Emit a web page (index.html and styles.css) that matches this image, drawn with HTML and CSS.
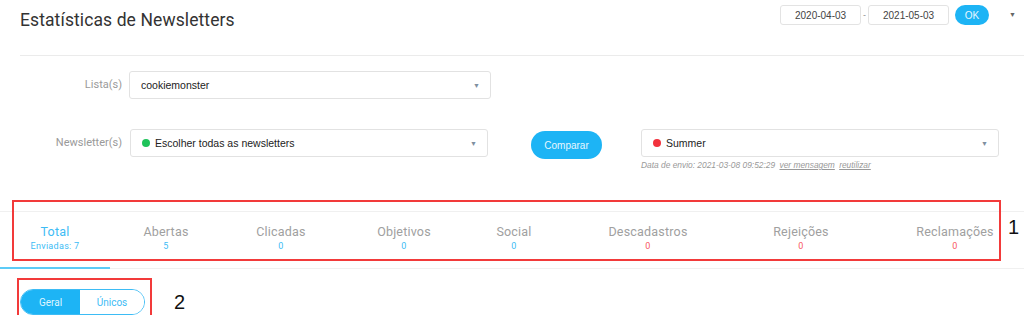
FILE: index.html
```
<!DOCTYPE html>
<html lang="pt">
<head>
  <meta charset="UTF-8" />
  <title>Estatísticas de Newsletters</title>
  <link rel="stylesheet" href="styles.css">
</head>
<body>

<div class="header">
  <h1>Estatísticas de Newsletters</h1>
  <div class="dates">
    <input type="text" class="date" value="2020-04-03">
    <span class="dash">-</span>
    <input type="text" class="date" value="2021-05-03">
    <button class="ok-btn">OK</button>
    <span class="caret">&#9660;</span>
  </div>
</div>

<div class="filters">
  <div class="row">
    <label class="lbl">Lista(s)</label>
    <div class="select wide">
      <span>cookiemonster</span>
      <span class="arrow">&#9660;</span>
    </div>
  </div>

  <div class="row row-news">
    <label class="lbl">Newsletter(s)</label>
    <div class="select news">
      <span class="dot green"></span>
      <span>Escolher todas as newsletters</span>
      <span class="arrow">&#9660;</span>
    </div>
    <button class="compare-btn">Comparar</button>
    <div class="compare">
      <div class="select news">
        <span class="dot red"></span>
        <span>Summer</span>
        <span class="arrow">&#9660;</span>
      </div>
      <div class="sent">Data de envio: 2021-03-08 09:52:29 <a href="#">ver mensagem</a> <a href="#">reutilizar</a></div>
    </div>
  </div>
</div>

<div class="tabs">
  <div class="tab active"><div class="t-name">Total</div><div class="t-val">Enviadas: 7</div></div>
  <div class="tab"><div class="t-name">Abertas</div><div class="t-val">5</div></div>
  <div class="tab"><div class="t-name">Clicadas</div><div class="t-val">0</div></div>
  <div class="tab"><div class="t-name">Objetivos</div><div class="t-val">0</div></div>
  <div class="tab"><div class="t-name">Social</div><div class="t-val">0</div></div>
  <div class="tab"><div class="t-name">Descadastros</div><div class="t-val bad">0</div></div>
  <div class="tab"><div class="t-name">Rejeições</div><div class="t-val bad">0</div></div>
  <div class="tab last"><div class="t-name">Reclamações</div><div class="t-val bad">0</div></div>
</div>

<div class="toggle">
  <button class="tg on">Geral</button>
  <button class="tg">Únicos</button>
</div>

<!-- anotações -->
<div class="mark mark-1"></div>
<div class="mark-num num-1">1</div>
<div class="mark mark-2"></div>
<div class="mark-num num-2">2</div>

</body>
</html>
```

FILE: styles.css
```
body {
  margin: 0;
  font-family: Roboto, "Liberation Sans", sans-serif;
  color: #333;
  background: #fff;
  position: relative;
}

.header {
  display: flex;
  justify-content: space-between;
  align-items: flex-start;
  margin-left: 20px;
  height: 55px;
  border-bottom: 1px solid #ebebeb;
}

h1 {
  margin: 0;
  padding-top: 10px;
  font-size: 17.5px;
  font-weight: 400;
  letter-spacing: 0.1px;
  color: #333;
}

.dates {
  display: flex;
  align-items: center;
  padding-top: 5px;
  padding-right: 8px;
}

.date {
  width: 81px;
  height: 20px;
  box-sizing: border-box;
  border: 1px solid #e3e3e3;
  border-radius: 3px;
  font-family: "Liberation Sans", sans-serif;
  font-size: 10px;
  color: #444;
  text-align: center;
  padding: 0;
}

.dash {
  font-size: 9px;
  color: #888;
  width: 7px;
  text-align: center;
}

.ok-btn {
  margin-left: 6px;
  width: 34px;
  height: 20px;
  border: none;
  border-radius: 10px;
  background: #1db4f5;
  color: #e6f7ff;
  font-family: "Liberation Sans", sans-serif;
  font-size: 10px;
  padding: 0;
}

.caret {
  margin-left: 20px;
  font-size: 7px;
  color: #666;
}

.filters {
  padding-top: 15px;
}

.row {
  display: flex;
  align-items: flex-start;
}

.row-news {
  margin-top: 30px;
}

.lbl {
  width: 122px;
  box-sizing: border-box;
  text-align: right;
  font-size: 11px;
  color: #9a9a9a;
  line-height: 28px;
}

.select {
  display: flex;
  align-items: center;
  height: 28px;
  box-sizing: border-box;
  border: 1px solid #e2e2e2;
  border-radius: 3px;
  padding: 0 10px 0 11px;
  font-family: "Liberation Sans", sans-serif;
  font-size: 10.5px;
  color: #222;
}

.wide {
  margin-left: 7px;
  width: 362px;
}

.news {
  margin-left: 8px;
  width: 358px;
}

.compare .news {
  margin-left: 0;
}

.arrow {
  margin-left: auto;
  font-size: 7px;
  color: #7f8fa0;
}

.dot {
  width: 8px;
  height: 8px;
  border-radius: 50%;
  margin-right: 5px;
  margin-left: 0;
}

.green { background: #1ec35a; }
.red { background: #f2323d; }

.compare-btn {
  margin-left: 43px;
  margin-top: 2px;
  width: 71px;
  height: 28px;
  border: none;
  border-radius: 14px;
  background: #1db4f5;
  color: #e6f7ff;
  font-family: "Liberation Sans", sans-serif;
  font-size: 10px;
  padding: 0;
}

.compare {
  margin-left: 39px;
}

.sent {
  margin-top: 3px;
  font-family: "Liberation Sans", sans-serif;
  font-style: italic;
  font-size: 8.4px;
  color: #999;
}

.sent a {
  color: #999;
  margin-left: 2px;
}

.tabs {
  display: grid;
  grid-template-columns: 110px 112px 118px 128px 92px 176px 130px 1fr;
  margin-top: 41px;
  border-top: 1px solid #f0f0f0;
  border-bottom: 1px solid #f0f0f0;
  height: 56px;
}

.tab {
  text-align: center;
  padding-top: 12px;
  box-sizing: border-box;
  height: 57px;
}

.tab.active {
  border-bottom: 2px solid #5ccbf7;
}

.tab.last {
  padding-left: 20px;
}

.t-name {
  font-size: 12.5px;
  color: #a0a0a0;
  letter-spacing: 0.2px;
}

.active .t-name {
  color: #3dbcf5;
}

.t-val {
  font-size: 9px;
  color: #3dbcf5;
  margin-top: 2px;
  letter-spacing: 0.3px;
}

.t-val.bad {
  color: #f75a63;
}

.toggle {
  display: flex;
  margin: 20px 0 0 20px;
  width: 125px;
  height: 26px;
  box-sizing: border-box;
  border: 1px solid #3dbcf5;
  border-radius: 13px;
  overflow: hidden;
}

.tg {
  border: none;
  background: #fff;
  color: #3dbcf5;
  font-family: Roboto, sans-serif;
  font-size: 10px;
  padding: 0;
  flex: 1;
}

.tg.on {
  flex: 0 0 59px;
  background: #1db4f5;
  color: #dff4ff;
}

.mark {
  position: absolute;
  border: 2px solid #f23a3a;
}

.mark-1 {
  left: 12px;
  top: 200px;
  width: 985px;
  height: 57px;
}

.mark-2 {
  left: 17px;
  top: 278px;
  width: 131px;
  height: 43px;
}

.mark-num {
  position: absolute;
  font-family: "Liberation Sans", sans-serif;
  font-size: 20px;
  color: #111;
}

.num-1 {
  left: 1008px;
  top: 216px;
}

.num-2 {
  left: 174px;
  top: 291px;
}
```
